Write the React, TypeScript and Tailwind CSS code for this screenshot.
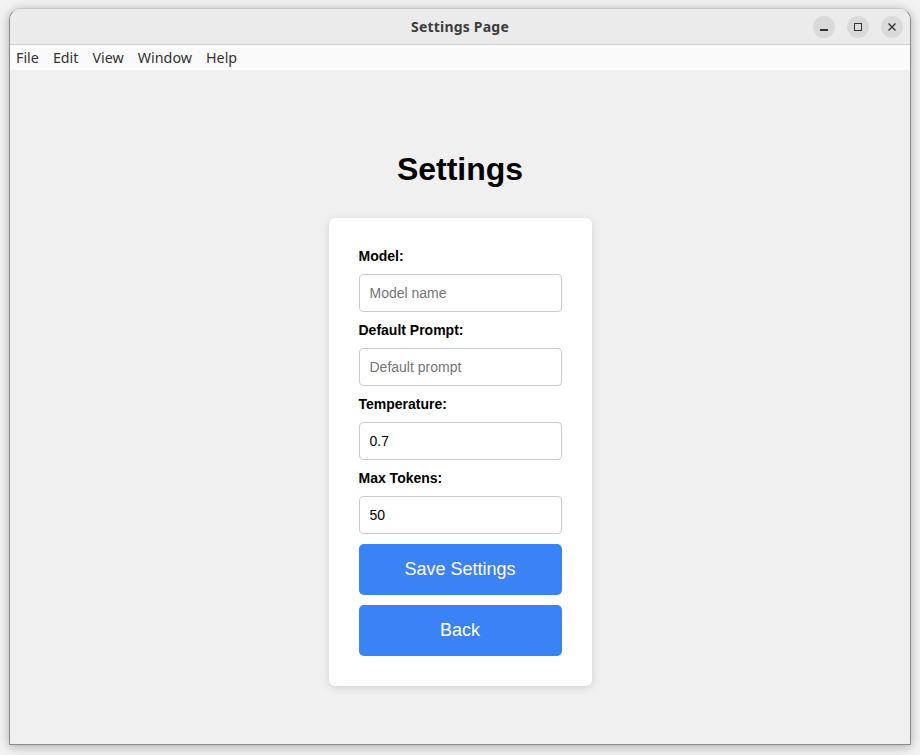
import React from "react";

export default function App() {
  const fields = [
    { label: "Model:", placeholder: "Model name", value: "" },
    { label: "Default Prompt:", placeholder: "Default prompt", value: "" },
    { label: "Temperature:", placeholder: "", value: "0.7" },
    { label: "Max Tokens:", placeholder: "", value: "50" },
  ];
  return (
    <div className="w-[920px] h-[755px] bg-[#f4f4f4] pt-[8px] pl-[9px]">
      <div className="w-[902px] h-[737px] flex flex-col rounded-t-[12px] border border-[#8a8a8a] border-t-[#c8c8c8] shadow-[0_2px_12px_rgba(0,0,0,0.3)] overflow-hidden bg-[#f0f0f0]">
        <div className="h-[36px] shrink-0 bg-[#ebebeb] border-b border-[#d2d2d2] flex items-center relative">
          <div className="flex-1 text-center text-[14px] font-bold text-[#3d3d3d] [font-family:'Noto_Sans',sans-serif] tracking-[0.2px]">
            Settings Page
          </div>
          <div className="absolute right-[7px] top-[7px] flex gap-[12px]">
            <div className="w-[22px] h-[22px] rounded-full bg-[#dadada] flex items-center justify-center">
              <div className="w-[8px] h-[1.5px] bg-[#333] mt-[6px]" />
            </div>
            <div className="w-[22px] h-[22px] rounded-full bg-[#dadada] flex items-center justify-center">
              <div className="w-[8px] h-[8px] border border-[#333]" />
            </div>
            <div className="w-[22px] h-[22px] rounded-full bg-[#dadada] flex items-center justify-center">
              <svg width="10" height="10" viewBox="0 0 10 10">
                <path d="M1.5 1.5 L8.5 8.5 M8.5 1.5 L1.5 8.5" stroke="#333" strokeWidth="1.4" />
              </svg>
            </div>
          </div>
        </div>
        <div className="h-[25px] shrink-0 bg-[#fafafa] flex items-center pl-[6px] gap-[14px] text-[14.3px] text-[#333] [font-family:'Noto_Sans',sans-serif]">
          <span>File</span>
          <span>Edit</span>
          <span>View</span>
          <span>Window</span>
          <span>Help</span>
        </div>
        <div className="flex-1 flex flex-col items-center pt-[81px] [font-family:'Liberation_Sans',Arial,sans-serif]">
          <h1 className="text-[32px] leading-[37px] font-bold text-black">Settings</h1>
          <div className="mt-[30px] w-[263px] bg-white rounded-[6px] shadow-[0_2px_8px_rgba(0,0,0,0.12)] p-[30px] flex flex-col">
            {fields.map((f, i) => (
              <div key={i} className={"flex flex-col " + (i > 0 ? "mt-[10px]" : "")}>
                <label className="text-[14px] leading-[17px] font-bold text-black">{f.label}</label>
                <input
                  className="mt-[9px] h-[38px] w-full border border-[#cccccc] rounded-[4px] px-[10px] text-[14px] text-black placeholder-[#757575] outline-none"
                  placeholder={f.placeholder}
                  defaultValue={f.value}
                />
              </div>
            ))}
            <button className="mt-[10px] h-[51px] w-full bg-[#3b82f6] text-white text-[18px] rounded-[5px]">
              Save Settings
            </button>
            <button className="mt-[10px] h-[51px] w-full bg-[#3b82f6] text-white text-[18px] rounded-[5px]">
              Back
            </button>
          </div>
        </div>
      </div>
    </div>
  );
}
